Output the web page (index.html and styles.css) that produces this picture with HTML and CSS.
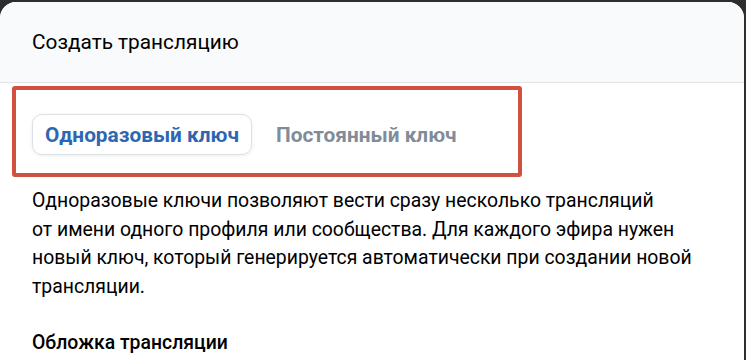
FILE: index.html
```html
<!DOCTYPE html>
<html lang="ru">
<head>
    <meta charset="UTF-8">
    <meta name="viewport" content="width=device-width, initial-scale=1.0">
    <title>Создать трансляцию</title>
    <link rel="stylesheet" href="styles.css">
</head>
<body>
    <div class="modal">
        <div class="modal-header">Создать трансляцию</div>
        <div class="key-tabs">
            <button class="tab active">Одноразовый ключ</button>
            <button class="tab">Постоянный ключ</button>
        </div>
        <div class="modal-body">
            <p class="desc">Одноразовые ключи позволяют вести сразу несколько трансляций от&nbsp;имени одного профиля или сообщества. Для&nbsp;каждого эфира нужен новый ключ, который генерируется автоматически при&nbsp;создании новой трансляции.</p>
            <h4 class="section-title">Обложка трансляции</h4>
        </div>
    </div>
</body>
</html>
```

FILE: styles.css
```css
body {
    margin: 0;
    background: #2e2e2e;
    font-family: Roboto, "Noto Sans", Arial, sans-serif;
    overflow: hidden;
    height: 360px;
}

.modal {
    margin-top: 2px;
    width: 744px;
    height: 358px;
    background: #fff;
    border-radius: 16px 16px 0 0;
    overflow: hidden;
}

.modal-header {
    height: 80px;
    display: flex;
    align-items: center;
    padding: 0 32px;
    background: #f9fafb;
    border-bottom: 1px solid #e1e3e6;
    font-size: 20.8px;
    color: #000;
}

.key-tabs {
    margin: 3px 0 0 12px;
    width: 486px;
    height: 59px;
    padding: 24px 0 0 16px;
    border: 4px solid #d1503f;
    border-radius: 3px;
    display: flex;
    align-items: flex-start;
    gap: 11px;
    box-sizing: content-box;
}

.tab {
    height: 41px;
    padding: 0 12px;
    border: 1px solid transparent;
    border-radius: 10px;
    background: none;
    font-family: inherit;
    font-size: 20.8px;
    font-weight: 700;
    color: #818c99;
    white-space: nowrap;
    cursor: pointer;
}

.tab.active {
    width: 220px;
    background: #fff;
    border-color: #dce1e6;
    color: #2d67b2;
    box-shadow: 0 1px 4px rgba(0, 0, 0, 0.07);
}

.modal-body {
    padding: 0 32px;
}

.desc {
    margin: 10px 0 0;
    font-size: 19.4px;
    line-height: 28.5px;
    color: #000;
}

.section-title {
    margin: 28px 0 0;
    font-size: 19.4px;
    font-weight: 500;
    line-height: 28px;
    color: #000;
}
```
